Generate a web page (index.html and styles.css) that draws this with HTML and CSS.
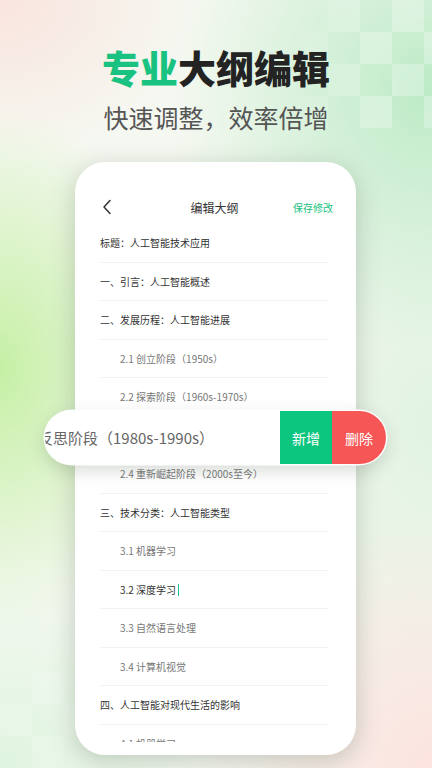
FILE: index.html
```html
<!DOCTYPE html>
<html lang="zh-CN">
<head>
<meta charset="utf-8">
<title>专业大纲编辑</title>
<link rel="stylesheet" href="styles.css">
</head>
<body>
<div class="page">
  <div class="checker checker-tr"></div>
  <div class="checker checker-bl"></div>

  <header class="hero">
    <h1 class="hero-title"><span class="accent">专业</span>大纲编辑</h1>
    <p class="hero-sub">快速调整，效率倍增</p>
  </header>

  <section class="card">
    <div class="topbar">
      <svg class="back" viewBox="0 0 10 16" width="10" height="16" aria-hidden="true">
        <path d="M8 1.5 L2 8 L8 14.5" fill="none" stroke="#333" stroke-width="1.5" stroke-linecap="round" stroke-linejoin="round"/>
      </svg>
      <div class="topbar-title">编辑大纲</div>
      <div class="topbar-save">保存修改</div>
    </div>
    <ul class="outline">
      <li class="row main">标题：人工智能技术应用</li>
      <li class="row main">一、引言：人工智能概述</li>
      <li class="row main">二、发展历程：人工智能进展</li>
      <li class="row sub">2.1 创立阶段（1950s）</li>
      <li class="row sub">2.2 探索阶段（1960s-1970s）</li>
      <li class="row sub under">2.3 反思阶段（1980s-1990s）</li>
      <li class="row sub">2.4 重新崛起阶段（2000s至今）</li>
      <li class="row main">三、技术分类：人工智能类型</li>
      <li class="row sub">3.1 机器学习</li>
      <li class="row sub active">3.2 深度学习<span class="caret"></span></li>
      <li class="row sub">3.3 自然语言处理</li>
      <li class="row sub">3.4 计算机视觉</li>
      <li class="row main">四、人工智能对现代生活的影响</li>
      <li class="row sub">4.1 机器学习</li>
    </ul>
  </section>

  <div class="swipe">
    <div class="swipe-text">反思阶段（1980s-1990s）</div>
    <div class="swipe-btn add">新增</div>
    <div class="swipe-btn del">删除</div>
  </div>
</div>
</body>
</html>
```

FILE: styles.css
```css
* { box-sizing: border-box; }
html, body { margin: 0; padding: 0; }
body {
  font-family: "Noto Sans CJK SC", "Noto Sans", sans-serif;
  width: 432px;
  height: 768px;
  overflow: hidden;
}
.page {
  position: relative;
  width: 432px;
  height: 768px;
  overflow: hidden;
  display: flex;
  flex-direction: column;
  align-items: stretch;
  background:
    radial-gradient(ellipse 200px 160px at 0% 0%, rgba(250,226,220,0.9), rgba(250,226,220,0) 100%),
    radial-gradient(ellipse 260px 260px at 100% 12%, rgba(185,234,196,0.95), rgba(185,234,196,0) 100%),
    radial-gradient(ellipse 170px 260px at 0% 48%, rgba(198,240,165,1), rgba(198,240,165,0) 100%),
    radial-gradient(ellipse 240px 260px at 100% 100%, rgba(252,226,222,0.95), rgba(252,226,222,0) 100%),
    radial-gradient(ellipse 200px 200px at 0% 100%, rgba(220,244,222,0.9), rgba(220,244,222,0) 100%),
    radial-gradient(ellipse 200px 300px at 100% 55%, rgba(220,242,222,0.8), rgba(220,242,222,0) 100%),
    #f5f8f1;
}
.checker {
  position: absolute;
  pointer-events: none;
  background-image: conic-gradient(rgba(255,255,255,0.28) 0 25%, transparent 0 50%, rgba(255,255,255,0.28) 0 75%, transparent 0);
  background-size: 64px 64px;
}
.checker-tr {
  left: 296px; top: 0; width: 136px; height: 128px;
  -webkit-mask-image: linear-gradient(to right, rgba(0,0,0,0.15), #000 60%);
  mask-image: linear-gradient(to right, rgba(0,0,0,0.15), #000 60%);
}
.checker-bl {
  left: 0; top: 672px; width: 96px; height: 96px;
  opacity: 0.45;
}

.hero {
  position: relative;
  padding-top: 46px;
  text-align: center;
}
.hero-title {
  margin: 0;
  font-size: 38px;
  line-height: 42px;
  font-weight: 900;
  color: #232323;
}
.accent { color: #19c280; }
.hero-sub {
  margin: 14px 0 0;
  font-size: 25px;
  line-height: 30px;
  font-weight: 400;
  color: #555;
}

.card {
  position: relative;
  margin: 30px 0 0 75px;
  width: 281px;
  height: 593px;
  background: #fff;
  border-radius: 30px;
  box-shadow: 0 6px 26px rgba(70, 90, 70, 0.28);
  padding: 28px 0 13px;
  display: flex;
  flex-direction: column;
}
.topbar {
  height: 34px;
  display: flex;
  align-items: center;
  padding: 0 23px 0 27px;
}
.back { display: block; flex: none; }
.topbar-title {
  flex: 1;
  text-align: center;
  font-size: 12px;
  font-weight: 400;
  color: #333;
  padding-left: 24px;
}
.topbar-save {
  font-size: 10px;
  color: #19c280;
  font-weight: 400;
}
.outline {
  list-style: none;
  margin: 0;
  padding: 0 28px 0 25px;
  flex: 1;
  overflow: hidden;
}
.row {
  height: 38.5px;
  line-height: 38.5px;
  font-size: 10px;
  border-bottom: 1px solid #f2f2f2;
  white-space: nowrap;
}
.row.main { color: #333; font-weight: 400; }
.row.sub { color: #777; padding-left: 20px; }
.row.sub.active { color: #333; }
.row.under { visibility: hidden; }
.caret {
  display: inline-block;
  width: 1px;
  height: 12px;
  background: #19c280;
  vertical-align: middle;
  margin-left: 2px;
  margin-top: -2px;
}

.swipe {
  position: absolute;
  left: 45px;
  top: 411px;
  width: 341px;
  height: 53px;
  border-radius: 27px;
  background: #fff;
  overflow: hidden;
  display: flex;
  align-items: stretch;
  box-shadow: 0 0 0 1.5px rgba(255,255,255,0.95), 0 6px 18px rgba(60, 80, 60, 0.22);
}
.swipe-text {
  flex: 1;
  display: flex;
  align-items: center;
  margin-left: -7px;
  font-size: 15px;
  color: #666;
  white-space: nowrap;
  overflow: hidden;
}
.swipe-btn {
  display: flex;
  align-items: center;
  justify-content: center;
  color: #fff;
  font-size: 14px;
  font-weight: 400;
}
.swipe-btn.add { width: 52px; background: #0cc67f; }
.swipe-btn.del { width: 54px; background: #f65656; }
```
